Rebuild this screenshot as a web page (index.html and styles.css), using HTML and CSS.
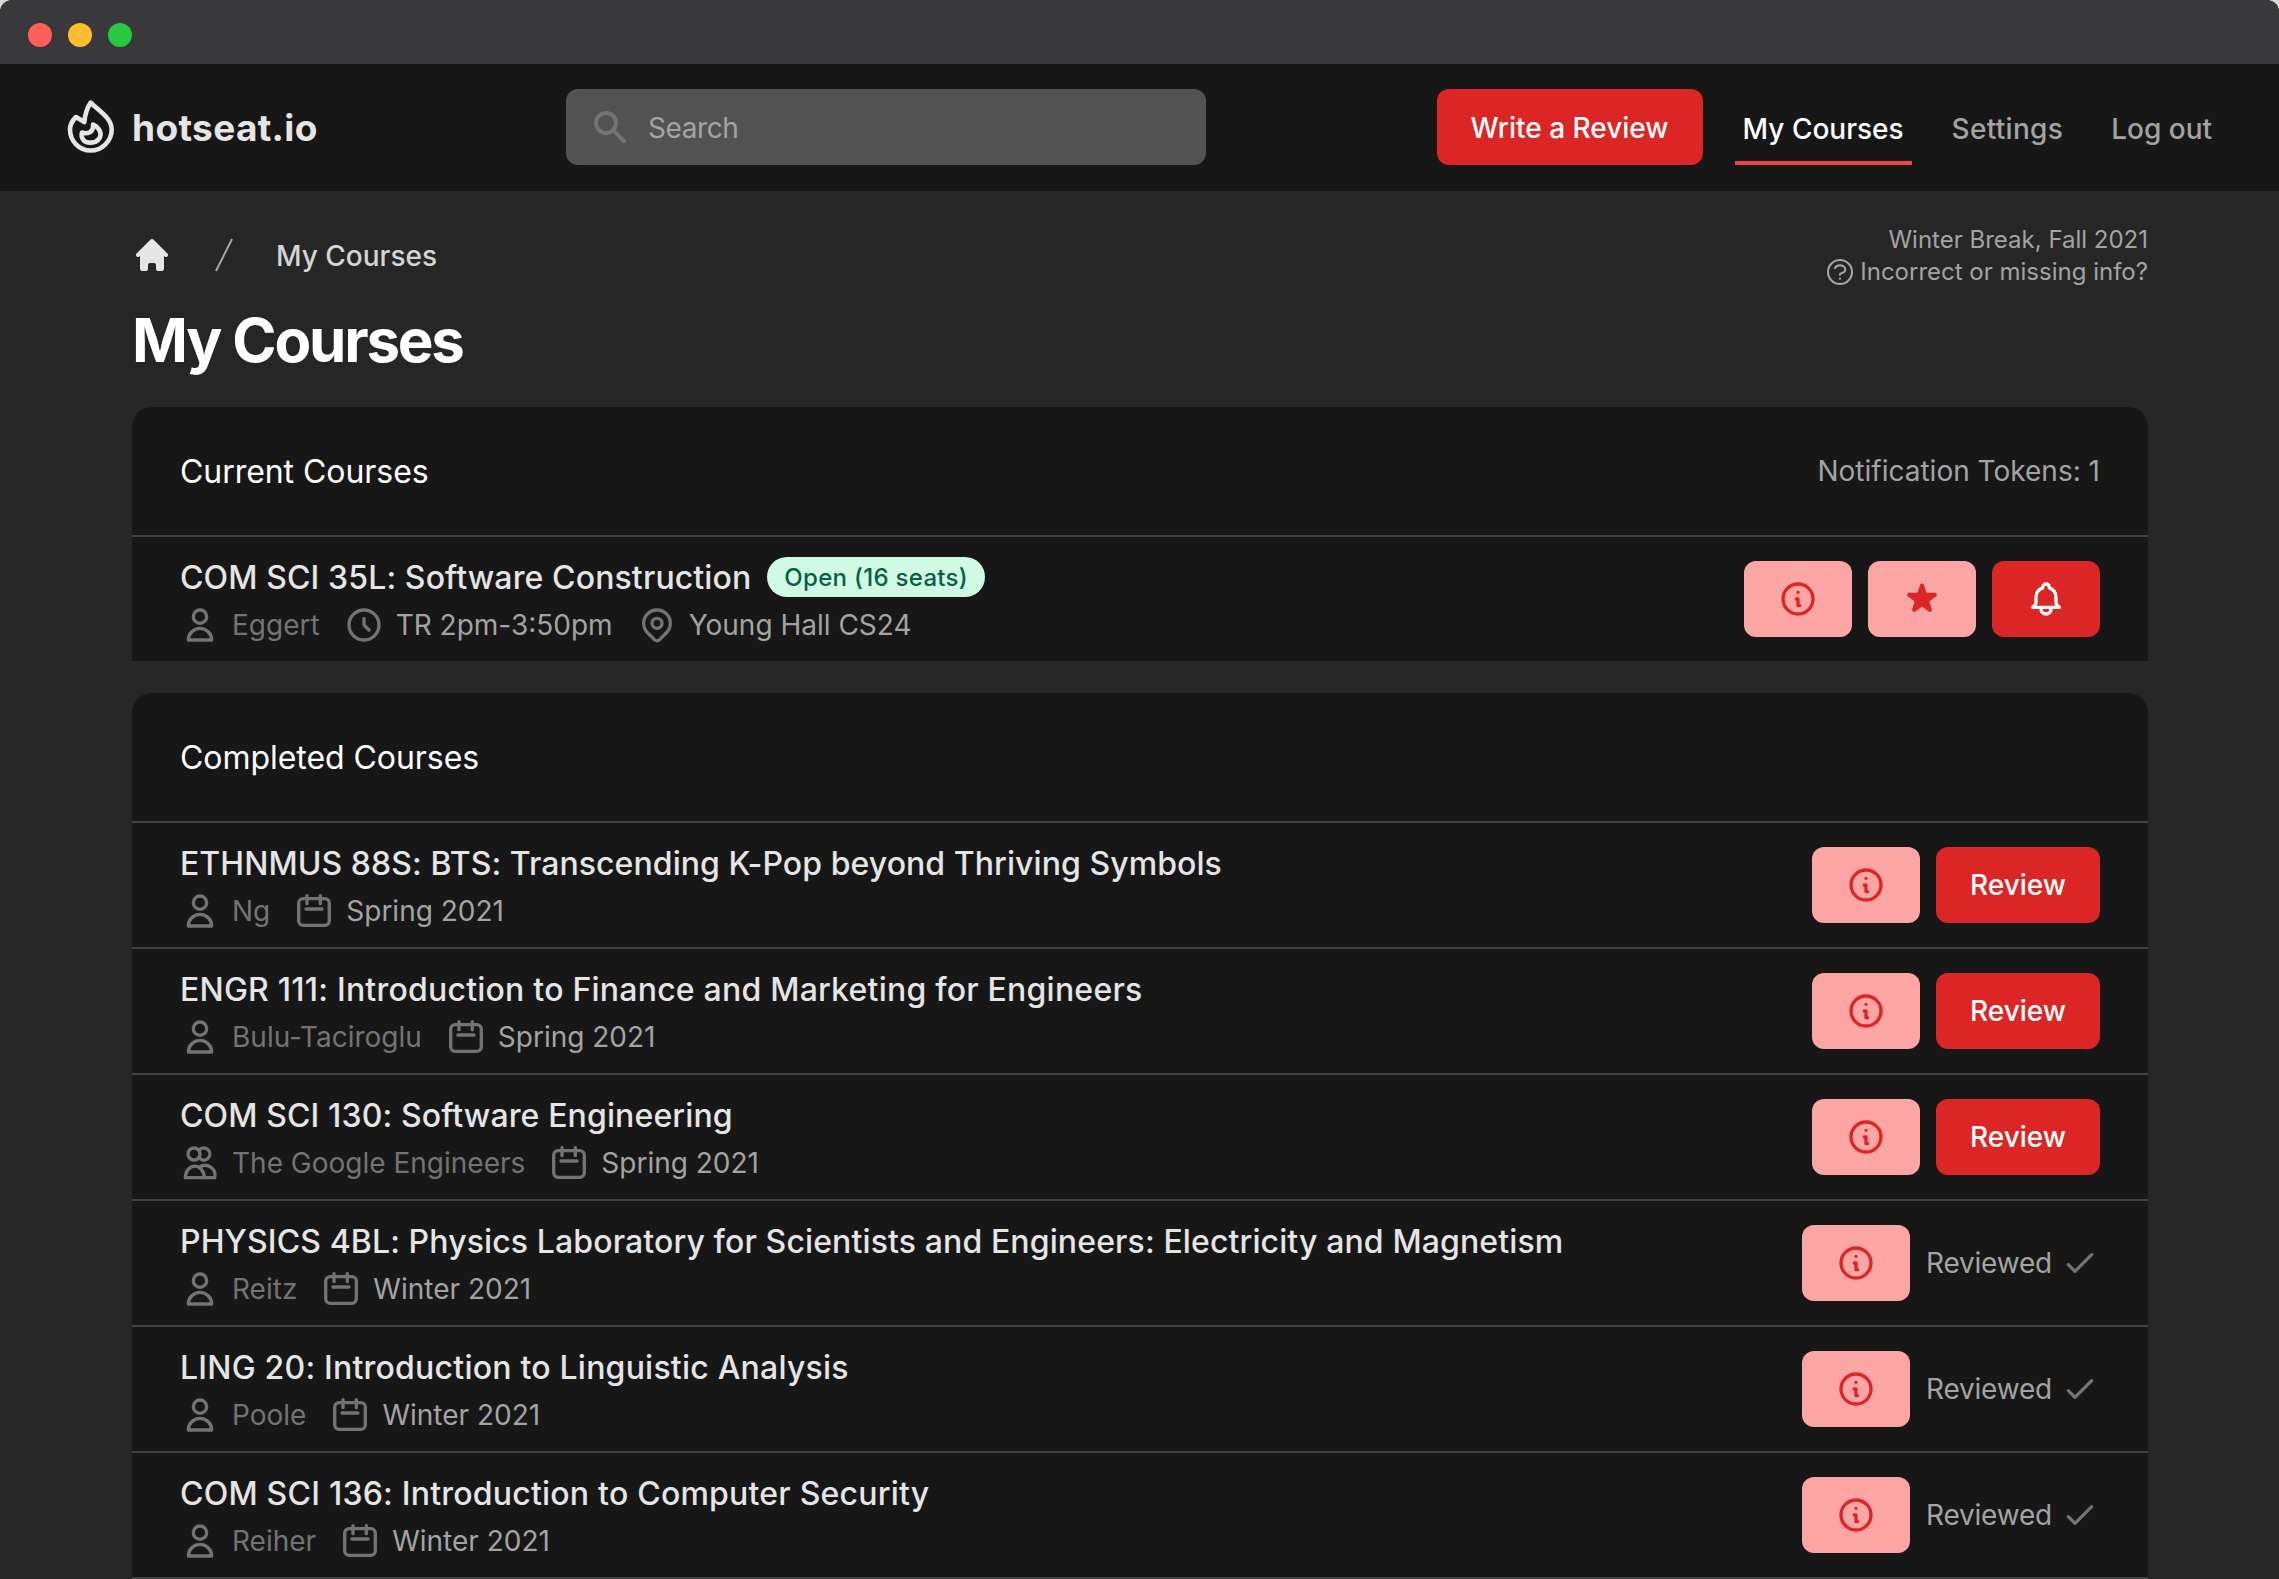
FILE: index.html
```html
<!DOCTYPE html>
<html lang="en">
<head>
<meta charset="utf-8">
<title>My Courses - hotseat.io</title>
<link rel="stylesheet" href="styles.css">
</head>
<body>
<svg class="sprite" aria-hidden="true">
  <symbol id="i-user" viewBox="0 0 24 24"><path fill="none" stroke="currentColor" stroke-width="2" stroke-linecap="round" stroke-linejoin="round" d="M16 7a4 4 0 11-8 0 4 4 0 018 0zM12 14a7 7 0 00-7 7h14a7 7 0 00-7-7z"/></symbol>
  <symbol id="i-users" viewBox="0 0 40 40"><g fill="none" stroke="currentColor" stroke-width="3.33" stroke-linecap="round" stroke-linejoin="round"><circle cx="14" cy="11" r="6"/><path d="M20 6.400a6 6 0 1 1 0 9.200"/><path d="M5.300 34.700h19a9.500 11.500 0 0 0-19 0z"/><path d="M19.500 24a10 10 0 0 1 15.200 10.700H24.300"/></g></symbol>
  <symbol id="i-clock" viewBox="0 0 24 24"><path fill="none" stroke="currentColor" stroke-width="2" stroke-linecap="round" stroke-linejoin="round" d="M12 8v4l3 3m6-3a9 9 0 11-18 0 9 9 0 0118 0z"/></symbol>
  <symbol id="i-pin" viewBox="0 0 24 24"><g fill="none" stroke="currentColor" stroke-width="2" stroke-linecap="round" stroke-linejoin="round"><path d="M17.657 16.657L13.414 20.9a1.998 1.998 0 01-2.827 0l-4.244-4.243a8 8 0 1111.314 0z"/><path d="M15 11a3 3 0 11-6 0 3 3 0 016 0z"/></g></symbol>
  <symbol id="i-cal" viewBox="0 0 40 40"><g fill="none" stroke="currentColor" stroke-width="3.33" stroke-linecap="round" stroke-linejoin="round"><rect x="4.700" y="7.700" width="30.600" height="26.600" rx="4.500"/><path d="M13 4.700v8M26.300 4.700v8M12 18h16"/></g></symbol>
  <symbol id="i-info" viewBox="0 0 24 24"><path fill="none" stroke="currentColor" stroke-width="2" stroke-linecap="round" stroke-linejoin="round" d="M13 16h-1v-4h-1m1-4h.01M21 12a9 9 0 11-18 0 9 9 0 0118 0z"/></symbol>
  <symbol id="i-check" viewBox="0 0 24 24"><path fill="none" stroke="currentColor" stroke-width="2" stroke-linecap="round" stroke-linejoin="round" d="M5 13l4 4L19 7"/></symbol>
</svg>

<div class="titlebar">
  <span class="dot dot-red"></span>
  <span class="dot dot-yellow"></span>
  <span class="dot dot-green"></span>
</div>

<header class="navbar">
  <a class="brand">
    <svg class="brand-icon" viewBox="0 0 50 54"><g fill="none" stroke="currentColor" stroke-width="4.600" stroke-linejoin="round"><path d="M24.700 2.600C33 11 45.700 18 45.700 29.500 45.700 41 36 50.500 24.700 50.500 13 50.500 4 41 4 29.500 4 24.500 6.500 20.500 10 17L18.300 22C19 14.500 21 8 24.700 2.600Z"/><path d="M27 24.500C34 28 36.500 34 33 38.800 29.500 43.500 20.500 44 17.300 39.800 15.300 37.200 15.300 34.800 16 32.500 21 34.500 28 32.500 27 24.500Z"/></g></svg>
    <span class="brand-name">hotseat.io</span>
  </a>
  <div class="search">
    <svg class="search-icon" viewBox="0 0 20 20"><path fill="currentColor" fill-rule="evenodd" clip-rule="evenodd" d="M8 4a4 4 0 100 8 4 4 0 000-8zM2 8a6 6 0 1110.89 3.476l4.817 4.817a1 1 0 01-1.414 1.414l-4.816-4.816A6 6 0 012 8z"/></svg>
    <span class="search-text">Search</span>
  </div>
  <nav class="nav">
    <a class="btn-write">Write a Review</a>
    <a class="nav-link nav-link-active">My Courses</a>
    <a class="nav-link nav-link-settings">Settings</a>
    <a class="nav-link">Log out</a>
  </nav>
</header>

<main class="main">
  <div class="page-head">
    <div class="page-head-left">
      <div class="crumbs">
        <svg class="crumb-home" viewBox="0 0 20 20"><path fill="currentColor" d="M10.707 2.293a1 1 0 00-1.414 0l-7 7a1 1 0 001.414 1.414L4 10.414V17a1 1 0 001 1h2a1 1 0 001-1v-2a1 1 0 011-1h2a1 1 0 011 1v2a1 1 0 001 1h2a1 1 0 001-1v-6.586l.293.293a1 1 0 001.414-1.414l-7-7z"/></svg>
        <svg class="crumb-slash" viewBox="0 0 20 20"><path fill="currentColor" d="M5.555 17.776l8-16 .894.448-8 16-.894-.448z"/></svg>
        <span class="crumb-text">My Courses</span>
      </div>
      <h1 class="page-title">My Courses</h1>
    </div>
    <div class="page-head-right">
      <div class="term">Winter Break, Fall 2021</div>
      <div class="help">
        <svg class="help-icon" viewBox="0 0 24 24"><path fill="none" stroke="currentColor" stroke-width="1.600" stroke-linecap="round" stroke-linejoin="round" d="M8.228 9c.549-1.165 2.03-2 3.772-2 2.21 0 4 1.343 4 3 0 1.4-1.278 2.575-3.006 2.907-.542.104-.994.54-.994 1.093m0 3h.01M21 12a9 9 0 11-18 0 9 9 0 0118 0z"/></svg>
        <span>Incorrect or missing info?</span>
      </div>
    </div>
  </div>

  <section class="card">
    <div class="card-head">
      <h2 class="card-title">Current Courses</h2>
      <span class="tokens">Notification Tokens: 1</span>
    </div>
    <div class="row row-last">
      <div class="course">
        <div class="course-title"><span>COM SCI 35L: Software Construction</span><span class="badge">Open (16 seats)</span></div>
        <div class="meta">
          <svg class="ico"><use href="#i-user"/></svg><span class="who">Eggert</span>
          <svg class="ico ico-next"><use href="#i-clock"/></svg><span class="what">TR 2pm-3:50pm</span>
          <svg class="ico ico-next"><use href="#i-pin"/></svg><span class="what">Young Hall CS24</span>
        </div>
      </div>
      <div class="actions">
        <button class="btn btn-soft"><svg class="ico"><use href="#i-info"/></svg></button>
        <button class="btn btn-soft"><svg class="ico" viewBox="0 0 20 20"><path fill="currentColor" d="M9.049 2.927c.3-.921 1.603-.921 1.902 0l1.07 3.292a1 1 0 00.95.69h3.462c.969 0 1.371 1.24.588 1.81l-2.8 2.034a1 1 0 00-.364 1.118l1.07 3.292c.3.921-.755 1.688-1.54 1.118l-2.8-2.034a1 1 0 00-1.175 0l-2.8 2.034c-.784.57-1.838-.197-1.539-1.118l1.07-3.292a1 1 0 00-.364-1.118L2.98 8.72c-.783-.57-.38-1.81.588-1.81h3.461a1 1 0 00.951-.69l1.07-3.292z"/></svg></button>
        <button class="btn btn-solid"><svg class="ico" viewBox="0 0 24 24"><path fill="none" stroke="currentColor" stroke-width="2" stroke-linecap="round" stroke-linejoin="round" d="M15 17h5l-1.405-1.405A2.032 2.032 0 0118 14.158V11a6.002 6.002 0 00-4-5.659V5a2 2 0 10-4 0v.341C7.67 6.165 6 8.388 6 11v3.159c0 .538-.214 1.055-.595 1.436L4 17h5m6 0v1a3 3 0 11-6 0v-1m6 0H9"/></svg></button>
      </div>
    </div>
  </section>

  <section class="card card-second">
    <div class="card-head">
      <h2 class="card-title">Completed Courses</h2>
    </div>
    <div class="row">
      <div class="course">
        <div class="course-title title-snug"><span>ETHNMUS 88S: BTS: Transcending K-Pop beyond Thriving Symbols</span></div>
        <div class="meta"><svg class="ico"><use href="#i-user"/></svg><span class="who">Ng</span><svg class="ico ico-next"><use href="#i-cal"/></svg><span class="what">Spring 2021</span></div>
      </div>
      <div class="actions"><button class="btn btn-soft"><svg class="ico"><use href="#i-info"/></svg></button><button class="btn btn-solid btn-review">Review</button></div>
    </div>
    <div class="row">
      <div class="course">
        <div class="course-title title-loose"><span>ENGR 111: Introduction to Finance and Marketing for Engineers</span></div>
        <div class="meta"><svg class="ico"><use href="#i-user"/></svg><span class="who">Bulu-Taciroglu</span><svg class="ico ico-next"><use href="#i-cal"/></svg><span class="what">Spring 2021</span></div>
      </div>
      <div class="actions"><button class="btn btn-soft"><svg class="ico"><use href="#i-info"/></svg></button><button class="btn btn-solid btn-review">Review</button></div>
    </div>
    <div class="row">
      <div class="course">
        <div class="course-title"><span>COM SCI 130: Software Engineering</span></div>
        <div class="meta"><svg class="ico"><use href="#i-users"/></svg><span class="who">The Google Engineers</span><svg class="ico ico-next"><use href="#i-cal"/></svg><span class="what">Spring 2021</span></div>
      </div>
      <div class="actions"><button class="btn btn-soft"><svg class="ico"><use href="#i-info"/></svg></button><button class="btn btn-solid btn-review">Review</button></div>
    </div>
    <div class="row">
      <div class="course">
        <div class="course-title"><span>PHYSICS 4BL: Physics Laboratory for Scientists and Engineers: Electricity and Magnetism</span></div>
        <div class="meta"><svg class="ico"><use href="#i-user"/></svg><span class="who">Reitz</span><svg class="ico ico-next"><use href="#i-cal"/></svg><span class="what">Winter 2021</span></div>
      </div>
      <div class="actions"><button class="btn btn-soft"><svg class="ico"><use href="#i-info"/></svg></button><span class="reviewed">Reviewed<svg class="ico ico-check"><use href="#i-check"/></svg></span></div>
    </div>
    <div class="row">
      <div class="course">
        <div class="course-title title-loose"><span>LING 20: Introduction to Linguistic Analysis</span></div>
        <div class="meta"><svg class="ico"><use href="#i-user"/></svg><span class="who">Poole</span><svg class="ico ico-next"><use href="#i-cal"/></svg><span class="what">Winter 2021</span></div>
      </div>
      <div class="actions"><button class="btn btn-soft"><svg class="ico"><use href="#i-info"/></svg></button><span class="reviewed">Reviewed<svg class="ico ico-check"><use href="#i-check"/></svg></span></div>
    </div>
    <div class="row">
      <div class="course">
        <div class="course-title title-loose"><span>COM SCI 136: Introduction to Computer Security</span></div>
        <div class="meta"><svg class="ico"><use href="#i-user"/></svg><span class="who">Reiher</span><svg class="ico ico-next"><use href="#i-cal"/></svg><span class="what">Winter 2021</span></div>
      </div>
      <div class="actions"><button class="btn btn-soft"><svg class="ico"><use href="#i-info"/></svg></button><span class="reviewed">Reviewed<svg class="ico ico-check"><use href="#i-check"/></svg></span></div>
    </div>
  </section>
</main>
</body>
</html>
```

FILE: styles.css
```css
* { box-sizing: border-box; }
html { background: #d9d9d9; height: 100%; overflow: hidden; }
body {
  margin: 0;
  height: 100%;
  overflow: hidden;
  font-family: Inter, "Liberation Sans", sans-serif;
  color: #e5e5e5;
  background: #262626;
  -webkit-font-smoothing: antialiased;
  border-radius: 12px 12px 0 0;
}
.sprite { display: none; }

.titlebar {
  height: 64px;
  background: #39393c;
  display: flex;
  align-items: center;
  gap: 16px;
  padding: 5px 0 0 28px;
  border-radius: 12px 12px 0 0;
}
.dot { width: 24px; height: 24px; border-radius: 50%; }
.dot-red { background: #ff5f57; }
.dot-yellow { background: #febc2e; }
.dot-green { background: #28c840; }

.navbar {
  height: 127px;
  background: #171717;
  display: flex;
  align-items: flex-start;
  padding: 25px 59px 0 66px;
}
.brand { display: flex; align-items: center; width: 500px; height: 76px; color: #e5e5e5; }
.brand-icon { width: 50px; height: 54px; flex: none; }
.brand-name { margin: 2px 0 0 16px; font-size: 37px; font-weight: 700; line-height: 40px; letter-spacing: .35px; }

.search {
  width: 640px;
  height: 76px;
  background: #525252;
  border-radius: 12px;
  display: flex;
  align-items: center;
  padding-left: 24px;
}
.search-icon { width: 40px; height: 40px; color: #737373; flex: none; }
.search-text { margin: 1px 0 0 18px; font-size: 28px; letter-spacing: -.4px; color: #a3a3a3; }

.nav { margin-left: auto; display: flex; align-items: stretch; gap: 32px; height: 76px; }
.btn-write {
  width: 266px;
  background: #dc2626;
  color: #fff;
  border-radius: 12px;
  font-size: 28px;
  font-weight: 500;
  padding-top: 1px;
  display: flex;
  align-items: center;
  justify-content: center;
}
.nav-link {
  padding: 7px 8px 0;
  border-bottom: 4px solid transparent;
  font-size: 28px;
  font-weight: 500;
  color: #a3a3a3;
  display: flex;
  align-items: center;
}
.nav-link-active { color: #fff; border-bottom-color: #ef4444; }
.nav-link-settings { letter-spacing: .3px; }

.main { padding: 0 131px 0 132px; }
.page-head { display: flex; justify-content: space-between; align-items: flex-start; }
.page-head-left { padding-top: 44px; }
.crumbs { display: flex; align-items: center; gap: 32px; }
.crumb-home { width: 40px; height: 40px; color: #e5e5e5; }
.crumb-slash { width: 40px; height: 40px; color: #a3a3a3; }
.crumb-text { margin-top: 2px; font-size: 28px; font-weight: 500; color: #d4d4d4; }
.page-title { margin: 29px 0 31px; font-size: 60px; line-height: 72px; font-weight: 700; letter-spacing: -2.2px; color: #fff; }

.page-head-right { padding-top: 33px; text-align: right; color: #a3a3a3; font-size: 24px; line-height: 32px; }
.help { display: flex; align-items: center; gap: 4px; }
.help-icon { width: 32px; height: 32px; flex: none; }

.card { background: #171717; border-radius: 20px 20px 0 0; }
.card-second { margin-top: 32px; }
.card-head {
  height: 130px;
  padding: 0 48px;
  border-bottom: 2px solid #404040;
  display: flex;
  align-items: center;
  justify-content: space-between;
}
.card-title { margin: 0; font-size: 32px; font-weight: 400; letter-spacing: -.05px; color: #fff; }
.tokens { font-size: 28px; font-weight: 400; color: #a3a3a3; }

.row {
  height: 126px;
  padding: 0 48px;
  border-bottom: 2px solid #404040;
  display: flex;
  align-items: center;
  justify-content: space-between;
}
.row-last { height: 124px; border-bottom: 0; }
.course { display: flex; flex-direction: column; gap: 4px; }
.course-title { height: 48px; display: flex; align-items: center; gap: 16px; font-size: 32px; font-weight: 500; letter-spacing: .12px; color: #e5e5e5; }
.title-loose { letter-spacing: .22px; }
.title-snug { letter-spacing: .07px; }
.badge {
  height: 40px;
  padding: 0 17px;
  border-radius: 20px;
  background: #d1fae5;
  color: #065f46;
  font-size: 24px;
  font-weight: 500;
  letter-spacing: .3px;
  display: flex;
  align-items: center;
}
.meta { height: 40px; display: flex; align-items: center; font-size: 28px; font-weight: 400; color: #737373; }
.ico { width: 40px; height: 40px; flex: none; display: block; }
.ico-next { margin-left: 24px; }
.who { margin-left: 12px; color: #737373; }
.what { margin-left: 12px; color: #a3a3a3; }

.actions { display: flex; align-items: center; gap: 16px; }
.btn {
  width: 108px;
  height: 76px;
  border: 0;
  border-radius: 12px;
  padding: 0;
  display: flex;
  align-items: center;
  justify-content: center;
  font-family: inherit;
}
.btn-soft { background: #fca5a5; color: #dc2626; }
.btn-solid { background: #dc2626; color: #fff; }
.btn-review { width: 164px; font-size: 28px; font-weight: 500; }
.reviewed { display: flex; align-items: center; gap: 8px; font-size: 28px; font-weight: 400; letter-spacing: -.2px; color: #a3a3a3; }
.ico-check { color: #737373; }
```
